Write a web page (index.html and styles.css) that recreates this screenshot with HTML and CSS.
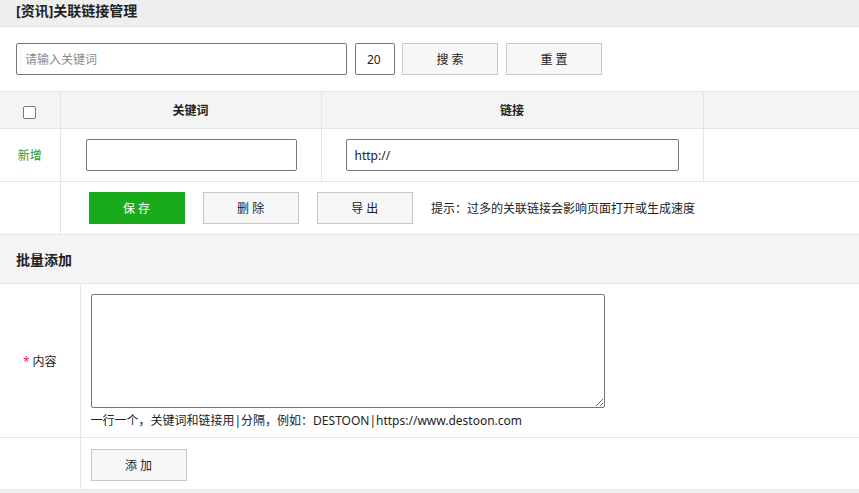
FILE: index.html
```html
<!DOCTYPE html>
<html lang="zh-CN">
<head>
  <meta charset="UTF-8">
  <title>关联链接管理</title>
  <link rel="stylesheet" href="styles.css">
</head>
<body>
  <!-- TITLE -->
  <div class="title">[资讯]关联链接管理</div>

  <!-- SEARCH -->
  <div class="search">
    <input type="text" class="inp kw" placeholder="请输入关键词">
    <input type="text" class="inp num" value="20">
    <button class="btn">搜 索</button>
    <button class="btn">重 置</button>
  </div>

  <!-- LINK LIST -->
  <table class="list">
    <tr class="head">
      <td class="c1"><span class="chk"></span></td>
      <td class="c2">关键词</td>
      <td class="c3">链接</td>
      <td class="c4"></td>
    </tr>
    <tr class="row">
      <td class="c1 green">新增</td>
      <td class="c2 pad-kw"><input type="text" class="inp w-kw"></td>
      <td class="c3 pad-url"><input type="text" class="inp w-url" value="http://"></td>
      <td class="c4"></td>
    </tr>
    <tr class="row">
      <td class="c1"></td>
      <td colspan="3" class="ops">
        <button class="btn btn-green">保 存</button>
        <button class="btn">删 除</button>
        <button class="btn">导 出</button>
        <span class="tip">提示：过多的关联链接会影响页面打开或生成速度</span>
      </td>
    </tr>
  </table>

  <!-- BATCH ADD -->
  <div class="section">批量添加</div>
  <table class="form">
    <tr>
      <td class="label"><span class="req">*</span> 内容</td>
      <td class="field">
        <textarea class="area"></textarea>
        <div class="hint">一行一个，关键词和链接用|分隔，例如：DESTOON|https://www.destoon.com</div>
      </td>
    </tr>
    <tr>
      <td class="label"></td>
      <td class="field submit"><button class="btn">添 加</button></td>
    </tr>
  </table>
</body>
</html>
```

FILE: styles.css
```css
* {
  margin: 0;
  padding: 0;
  box-sizing: border-box;
}
body {
  font-family: "Noto Sans", "Noto Sans CJK SC", sans-serif;
  font-size: 12px;
  color: #222;
  background-color: #f1f1f3;
}
/* Title bar */
.title {
  height: 27px;
  line-height: 22px;
  padding-left: 16px;
  font-size: 14px;
  font-weight: bold;
  background-color: #efefef;
  border-bottom: 1px solid #e2e2e2;
}
/* Search */
.search {
  display: flex;
  align-items: center;
  gap: 8px;
  padding: 16px;
  background-color: #fff;
}
.inp {
  height: 32px;
  padding: 0 8px;
  font-family: inherit;
  font-size: 12px;
  color: #222;
  border: 1px solid #767676;
  border-radius: 2px;
  outline: none;
  background-color: #fff;
}
.inp::placeholder {
  color: #8a8a8a;
}
.kw {
  width: 331px;
}
.num {
  width: 40px;
  padding: 0 11px;
  margin-right: -1px;
}
.btn {
  width: 96px;
  height: 32px;
  font-family: inherit;
  font-size: 12px;
  color: #222;
  background-color: #f7f7f7;
  border: 1px solid #c8c8c8;
  cursor: pointer;
}
.btn-green {
  color: #fff;
  background-color: #1aab1d;
  border-color: #1aab1d;
}
/* List table */
table {
  width: 100%;
  border-collapse: collapse;
  background-color: #fff;
}
td {
  border: 1px solid #e6e6ea;
  border-left: none;
  padding: 0;
}
.list {
  border-top: 1px solid #e6e6ea;
}
.head td {
  height: 37px;
  text-align: center;
  font-weight: bold;
  background-color: #f4f4f4;
}
.row td {
  height: 53px;
}
.c1 {
  width: 60px;
  text-align: center;
}
.c2 {
  width: 261px;
}
.c3 {
  width: 382px;
}
.c4 {
  border-right: none;
}
.chk {
  display: inline-block;
  width: 13px;
  height: 13px;
  margin-top: 2px;
  border: 1px solid #767676;
  border-radius: 2px;
  background-color: #fff;
  vertical-align: middle;
}
.green {
  color: #2f9a34;
}
.pad-kw {
  padding-left: 25px;
}
.pad-url {
  padding-left: 24px;
}
.w-kw {
  width: 211px;
}
.w-url {
  width: 333px;
}
.ops {
  padding-left: 28px;
  border-right: none;
}
.ops .btn {
  margin-right: 15px;
}
/* Batch add */
.section {
  height: 49px;
  line-height: 49px;
  padding-left: 16px;
  font-size: 14px;
  font-weight: bold;
  background-color: #f4f4f4;
  border-bottom: 1px solid #e6e6ea;
}
.form td {
  border-top: none;
}
.label {
  width: 80px;
  text-align: center;
}
.req {
  color: #f0245a;
}
.field {
  padding: 10px 10px 7px;
  border-right: none;
}
.area {
  display: block;
  width: 514px;
  height: 114px;
  border: 1px solid #767676;
  border-radius: 2px;
  font-family: inherit;
  resize: both;
}
.hint {
  margin-top: 4px;
  line-height: 18px;
}
.submit {
  height: 52px;
}
```
